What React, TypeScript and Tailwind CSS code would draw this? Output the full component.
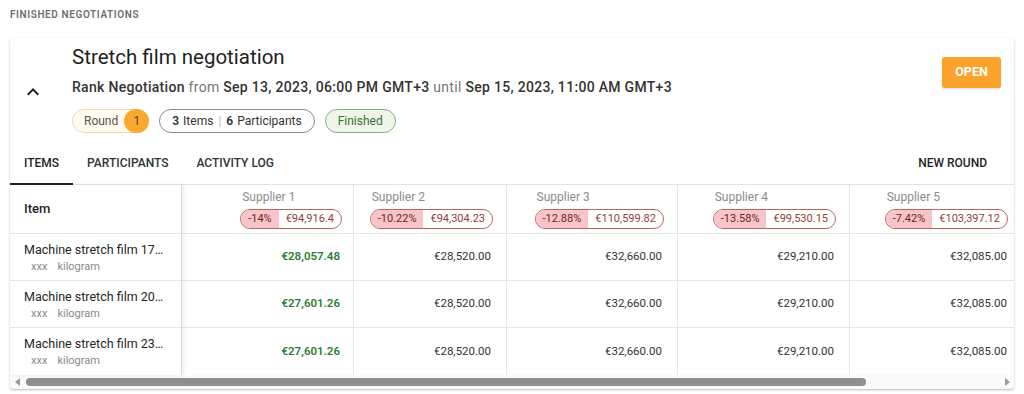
import React from 'react';

const suppliers = [
  { name: 'Supplier 1', pct: '-14%', total: '€94,916.4', width: 'w-[172px]', pad: 'pr-[11px]', vpad: 'pr-[13px]' },
  { name: 'Supplier 2', pct: '-10.22%', total: '€94,304.23', width: 'w-[153px]', pad: 'pr-[13px]', vpad: 'pr-[15px]' },
  { name: 'Supplier 3', pct: '-12.88%', total: '€110,599.82', width: 'w-[171px]', pad: 'pr-[13px]', vpad: 'pr-[15px]' },
  { name: 'Supplier 4', pct: '-13.58%', total: '€99,530.15', width: 'w-[172px]', pad: 'pr-[13px]', vpad: 'pr-[15px]' },
  { name: 'Supplier 5', pct: '-7.42%', total: '€103,397.12', width: 'w-[171px]', pad: 'pr-[12px]', vpad: 'pr-[13px]' },
];

const rows = [
  { name: 'Machine stretch film 17…', values: ['€28,057.48', '€28,520.00', '€32,660.00', '€29,210.00', '€32,085.00'] },
  { name: 'Machine stretch film 20…', values: ['€27,601.26', '€28,520.00', '€32,660.00', '€29,210.00', '€32,085.00'] },
  { name: 'Machine stretch film 23…', values: ['€27,601.26', '€28,520.00', '€32,660.00', '€29,210.00', '€32,085.00'] },
];

const App = () => {
  return (
    <div className="min-h-screen bg-white font-['Roboto',sans-serif] text-[#212121]">
      <div className="px-[10px] pt-[8px]">
        <div className="text-[10px] leading-[14px] font-semibold tracking-[0.6px] text-[#6f6f6f]">
          FINISHED NEGOTIATIONS
        </div>

        <div className="mt-[16px] rounded-[4px] bg-white overflow-hidden shadow-[0_1px_3px_rgba(0,0,0,0.18),0_1px_1px_rgba(0,0,0,0.1)] pt-[5px]">
          {/* header */}
          <div className="flex items-start">
            <div className="w-[46px] flex justify-center mt-[37px]">
              <svg width="24" height="24" viewBox="0 0 24 24" fill="#222">
                <path d="M12 8l-6 6 1.41 1.41L12 10.83l4.59 4.58L18 14z" />
              </svg>
            </div>
            <div className="ml-[16px] flex-1">
              <div className="text-[20.5px] leading-[28px] text-[#1f1f1f]">Stretch film negotiation</div>
              <div className="mt-[6px] text-[14px] leading-[20px] font-medium text-[#333] tracking-[0.3px]">
                Rank Negotiation <span className="font-normal text-[#777]">from</span> Sep 13, 2023, 06:00 PM GMT+3{' '}
                <span className="font-normal text-[#777]">until</span> Sep 15, 2023, 11:00 AM GMT+3
              </div>
              <div className="mt-[12px] flex items-center gap-[10px] text-[12px]">
                <div className="h-[24px] flex items-center rounded-full border border-[#f0dca8] bg-[#fffbf1] pl-[11px]">
                  <span className="text-[#555]">Round</span>
                  <span className="ml-[6px] -mr-[1px] w-[25px] h-[24px] rounded-full bg-[#f8a930] flex items-center justify-center text-[#5b3b08]">
                    1
                  </span>
                </div>
                <div className="h-[24px] flex items-center rounded-full border border-[#8a8a8a] px-[12px] text-[#333]">
                  <span className="font-semibold">3</span>
                  <span className="ml-[4px]">Items</span>
                  <span className="mx-[5px] text-[#bbb]">|</span>
                  <span className="font-semibold">6</span>
                  <span className="ml-[4px]">Participants</span>
                </div>
                <div className="h-[24px] flex items-center rounded-full border border-[#83b383] bg-[#eef6ea] px-[12px] text-[#3d6e3d]">
                  Finished
                </div>
              </div>
            </div>
            <button className="mt-[14px] mr-[13px] w-[59px] h-[31px] rounded-[3px] bg-[#fba22c] text-white text-[12.5px] font-bold shadow-[0_1px_2px_rgba(0,0,0,0.15)]">
              OPEN
            </button>
          </div>

          {/* tabs */}
          <div className="mt-[9px] h-[43px] flex items-stretch border-b border-[#e3e3e3] text-[12px] font-medium">
            <div className="relative px-[14px] flex items-center text-[#1f1f1f]">
              ITEMS
              <div className="absolute left-0 right-0 bottom-[-1px] h-[2px] bg-[#222]" />
            </div>
            <div className="px-[14px] flex items-center text-[#333]">PARTICIPANTS</div>
            <div className="px-[14px] flex items-center text-[#333]">ACTIVITY LOG</div>
            <div className="ml-auto mr-[27px] flex items-center text-[#1f1f1f]">NEW ROUND</div>
          </div>

          {/* table */}
          <div className="flex">
            <div className="w-[172px] shrink-0 border-r border-[#dcdcdc] shadow-[2px_0_4px_rgba(0,0,0,0.07)] z-10 bg-white">
              <div className="h-[49px] flex items-center pl-[14px] border-b border-[#e6e6e6] text-[13px] font-medium text-[#222]">
                Item
              </div>
              {rows.map((r, i) => (
                <div
                  key={i}
                  className={`h-[47px] flex flex-col justify-center pl-[14px] ${i < rows.length - 1 ? 'border-b border-[#e6e6e6]' : ''}`}
                >
                  <div className="text-[12.5px] leading-[17px] text-[#262626] whitespace-nowrap">{r.name}</div>
                  <div className="text-[11px] leading-[14px] text-[#8a8a8a] mt-[2px] pl-[7px] flex gap-[10px]">
                    <span>xxx</span>
                    <span>kilogram</span>
                  </div>
                </div>
              ))}
            </div>

            {suppliers.map((s, c) => (
              <div key={c} className={`${s.width} shrink-0 border-r border-[#e6e6e6]`}>
                <div className={`h-[49px] flex justify-end items-center ${s.pad} border-b border-[#e6e6e6]`}>
                  <div>
                    <div className="pl-[2px] text-[12px] leading-[16px] text-[#8c8c8c]">{s.name}</div>
                    <div className="mt-[4px] h-[20px] flex rounded-full border border-[#b8665f] overflow-hidden text-[11px] leading-[18px]">
                      <span className="bg-[#f7c5c8] pl-[7px] pr-[7px] text-[#6e2424]">{s.pct}</span>
                      <span className="px-[7px] text-[#8f3f37]">{s.total}</span>
                    </div>
                  </div>
                </div>
                {rows.map((r, i) => (
                  <div
                    key={i}
                    className={`h-[47px] flex items-center justify-end ${s.vpad} text-[11.5px] ${
                      c === 0 ? 'font-semibold text-[#2e7d32]' : 'text-[#333]'
                    } ${i < rows.length - 1 ? 'border-b border-[#e6e6e6]' : ''}`}
                  >
                    {r.values[c]}
                  </div>
                ))}
              </div>
            ))}
          </div>

          {/* scrollbar */}
          <div className="h-[14px] flex items-center bg-[#fafafa]">
            <div className="ml-[5px] w-0 h-0 border-y-[4px] border-y-transparent border-r-[5px] border-r-[#9a9a9a]" />
            <div className="ml-[6px] w-[840px] h-[8px] rounded-full bg-[#8f8f8f]" />
            <div className="ml-auto mr-[4px] w-0 h-0 border-y-[4px] border-y-transparent border-l-[5px] border-l-[#9a9a9a]" />
          </div>
        </div>
      </div>
    </div>
  );
};

export default App;
